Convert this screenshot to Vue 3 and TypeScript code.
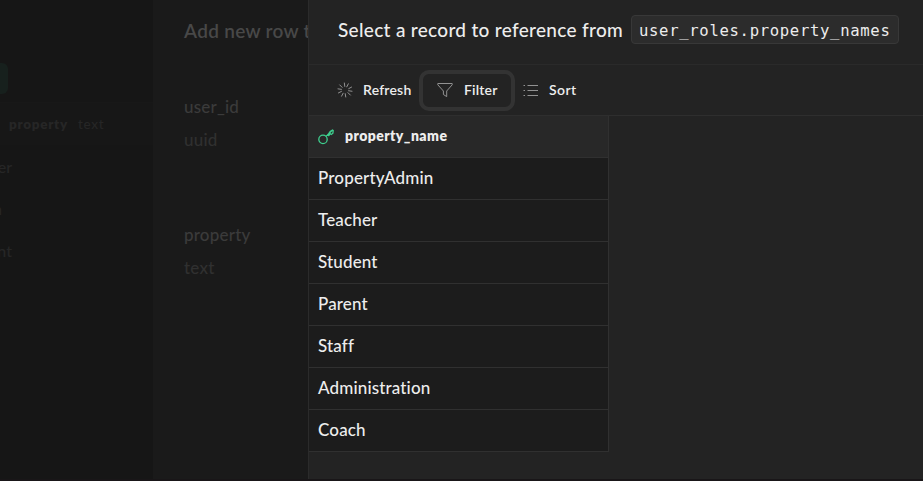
<script setup lang="ts">
interface Field {
  name: string
  type: string
}

const fields: Field[] = [
  { name: 'user_id', type: 'uuid' },
  { name: 'property', type: 'text' },
]

const backgroundRows: string[] = ['er', 'n', 'nt']

const records: string[] = [
  'PropertyAdmin',
  'Teacher',
  'Student',
  'Parent',
  'Staff',
  'Administration',
  'Coach',
]
</script>

<template>
  <div class="screen">
    <div class="editor">
      <div class="insert"></div>
      <div class="editor-head"><b>property</b><span>text</span></div>
      <div v-for="row in backgroundRows" :key="row" class="editor-row">
        <span>{{ row }}</span>
      </div>
    </div>

    <div class="form">
      <h2>Add new row to</h2>
      <div v-for="field in fields" :key="field.name" class="field">
        <div class="field-name">{{ field.name }}</div>
        <div class="field-type">{{ field.type }}</div>
      </div>
    </div>

    <main class="panel">
      <header class="panel-head">
        <span class="title">Select a record to reference from</span>
        <code>user_roles.property_names</code>
      </header>

      <div class="toolbar">
        <button class="tool refresh">
          <svg width="16" height="16" viewBox="0 0 16 16" fill="none" stroke="currentColor">
            <path d="M7.3 .6 7.8 4.8M11.5 1.5 9.6 5.2M14.9 4.9 11.4 6.8M15.4 9.3 11.2 8.7M13.7 13.4 10.7 10.4M8.8 15.4 8.2 11.3M4.4 14.5 6.3 10.9M1.1 11.1 4.8 9.2M.6 6.8 4.8 7.4M2.4 2.6 5.4 5.6" />
          </svg>
          <span>Refresh</span>
        </button>
        <button class="tool filter">
          <svg width="16" height="16" viewBox="0 0 16 16" fill="none" stroke="currentColor">
            <path d="M.8 1.5H15.2V2.8L9.7 9V14.6L6.4 12.5V9L.8 2.8Z" />
          </svg>
          <span>Filter</span>
        </button>
        <button class="tool sort">
          <svg width="16" height="16" viewBox="0 0 16 16" fill="none" stroke="currentColor">
            <path d="M4.5 3.5H15M4.5 8.5H15M4.5 13.5H15M.5 3.5H2M.5 8.5H2M.5 13.5H2" />
          </svg>
          <span>Sort</span>
        </button>
      </div>

      <div class="table">
        <div class="column-head">
          <svg width="16" height="16" viewBox="0 0 16 16" fill="none" stroke="currentColor" stroke-width="1.3">
            <circle cx="5" cy="10.4" r="4.2" />
            <path d="M8 7.4 14.3 1.2M10.6 4.8 12.2 2.4 14.5 1 15.2 1.6 14.9 4.2 13.3 5.5 12.2 4.6 10.8 6.5 9.7 5.7" />
          </svg>
          <span>property_name</span>
        </div>
        <div v-for="record in records" :key="record" class="record">
          <span>{{ record }}</span>
        </div>
      </div>
    </main>
  </div>
</template>

<style>
body {
  background: #171717;
}
</style>

<style scoped>
* {
  box-sizing: border-box;
}

.screen {
  display: grid;
  grid-template-columns: 153px 155px 615px;
  width: 923px;
  height: 481px;
  overflow: hidden;
  border-bottom: 2px solid #191618;
  font-family: Lato, 'Liberation Sans', sans-serif;
  font-weight: 500;
  white-space: nowrap;
}

.editor {
  overflow: hidden;
  background: #161616;
  color: #262626;
}

.insert {
  width: 8px;
  height: 31px;
  margin-top: 63px;
  border-radius: 0 6px 6px 0;
  background: #17201d;
}

.editor-head {
  display: flex;
  align-items: center;
  gap: 10px;
  height: 43px;
  margin-top: 8px;
  padding: 0 0 1px 9px;
  border-top: 1px solid #181818;
  background: #171717;
  color: #262626;
  font-size: 13.5px;
  letter-spacing: 0.7px;
}

.editor-head b {
  font-weight: 800;
}

.editor-row {
  display: flex;
  justify-content: flex-end;
  align-items: center;
  width: 12px;
  height: 42px;
  font-size: 16px;
}

.editor-row:nth-of-type(4) {
  width: 2px;
}

.form {
  overflow: hidden;
  padding: 19px 0 0 31px;
  background: #1a1a1a;
  color: #3b3b3b;
}

.form h2 {
  height: 24px;
  margin: 0 0 47px;
  color: #484848;
  font-size: 19px;
  font-weight: 600;
  line-height: 24px;
  letter-spacing: 0.3px;
}

.field {
  height: 128px;
  font-size: 17px;
  line-height: 33px;
  letter-spacing: 0.2px;
}

.field-type {
  color: #303030;
}

.panel {
  border-left: 1px solid #2b2b2b;
  background: #232323;
  color: #ededed;
}

.panel-head {
  display: flex;
  align-items: center;
  height: 65px;
  padding: 0 0 5px 29px;
  border-bottom: 1px solid #2a2a2a;
}

.title {
  width: 293px;
  padding-bottom: 1px;
  font-size: 19px;
  letter-spacing: 0.31px;
}

code {
  width: 268px;
  height: 29px;
  padding-left: 7px;
  border: 1px solid #383838;
  border-radius: 4px;
  background: #2c2c2c;
  font-family: 'DejaVu Sans Mono', monospace;
  font-size: 15.6px;
  line-height: 31px;
  letter-spacing: 0.67px;
}

.toolbar {
  display: flex;
  align-items: center;
  height: 51px;
  padding-left: 28px;
  border-bottom: 1px solid #2e2e2e;
}

.tool {
  display: flex;
  align-items: center;
  gap: 10px;
  height: 35px;
  margin: 0;
  padding: 0;
  border: 0;
  background: none;
  color: #ededed;
  font: 600 14px Lato, sans-serif;
  letter-spacing: 0.2px;
}

.tool span,
.column-head span,
.record span {
  padding-bottom: 2px;
}

.tool svg {
  color: #929292;
}

.refresh {
  width: 82px;
}

.filter {
  gap: 11px;
  width: 96px;
  height: 41px;
  padding-left: 14px;
  border: 4px solid #333;
  border-radius: 10px;
}

.sort {
  margin-left: 8px;
  letter-spacing: 0.4px;
}

.table {
  width: 300px;
  border-right: 1px solid #303030;
  background: #1c1c1c;
}

.column-head,
.record {
  display: flex;
  align-items: center;
  height: 42px;
  padding-left: 9px;
  border-bottom: 1px solid #303030;
}

.column-head {
  gap: 11px;
  background: #282828;
  font-size: 14px;
  font-weight: 800;
  letter-spacing: 0.45px;
}

.column-head svg {
  color: #3ecf8e;
}

.record {
  font-size: 17px;
  letter-spacing: 0.15px;
  font-variant-ligatures: none;
}
</style>
